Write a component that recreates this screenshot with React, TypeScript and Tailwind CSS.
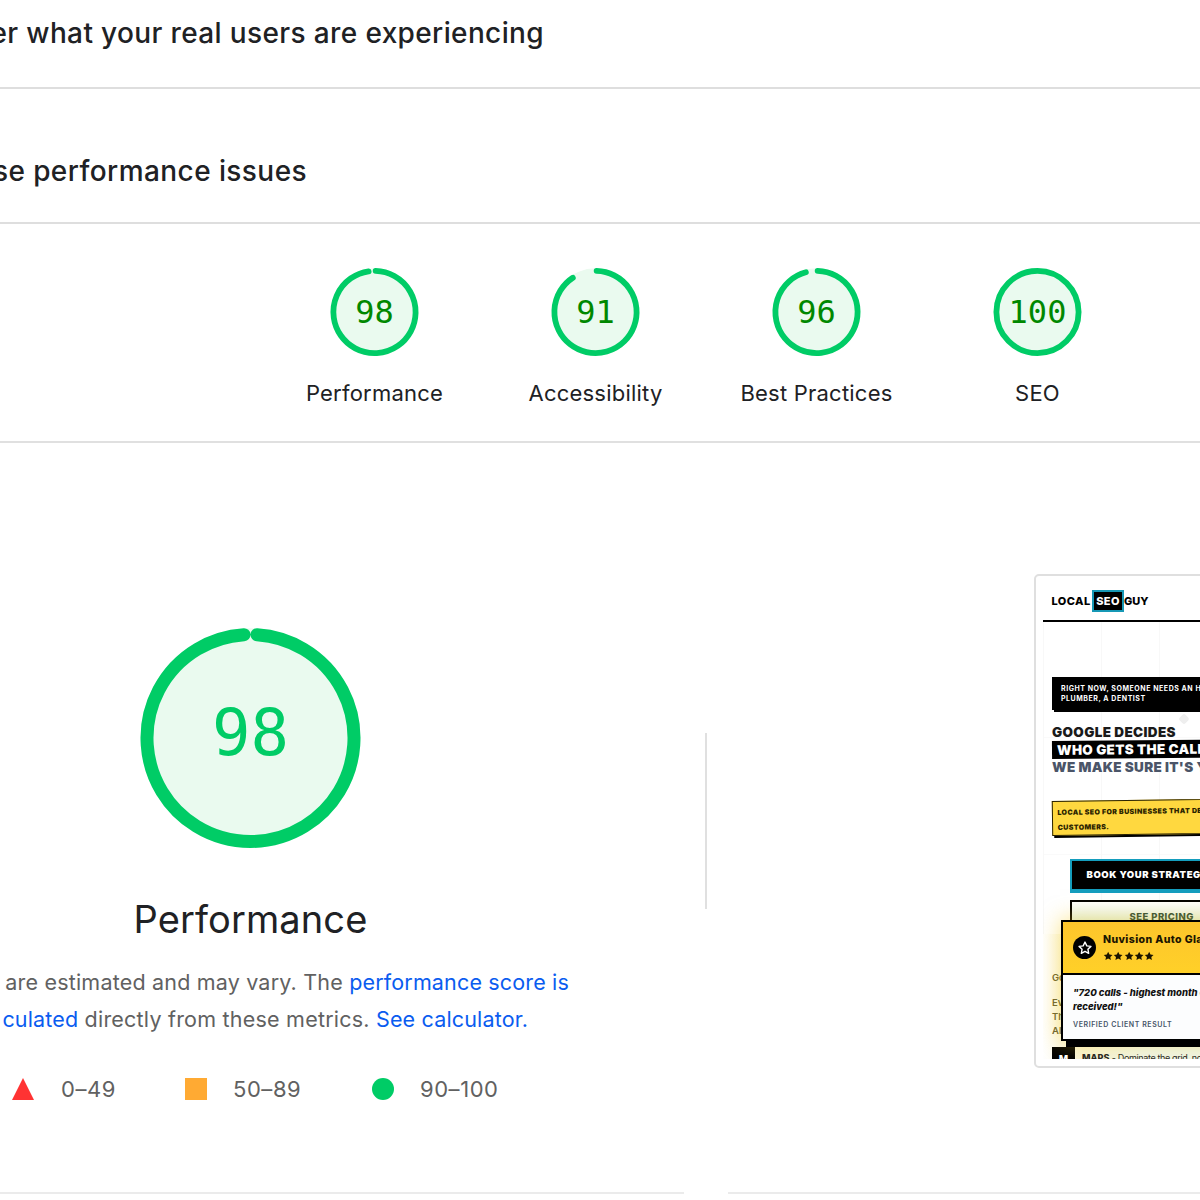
import React from "react";

const GREEN = "#00cc66";

function point(c: number, r: number, deg: number) {
  const a = (deg * Math.PI) / 180;
  return `${(c + r * Math.sin(a)).toFixed(3)} ${(c - r * Math.cos(a)).toFixed(3)}`;
}

type GaugeProps = { size: number; stroke: number; from: number; to: number; value: string; textClass: string };

function Gauge({ size, stroke, from, to, value, textClass }: GaugeProps) {
  const c = size / 2;
  const r = c - stroke / 2;
  const full = to - from >= 360;
  return (
    <div className="grid place-items-center">
      <svg className="col-start-1 row-start-1 overflow-visible" width={size} height={size} viewBox={`0 0 ${size} ${size}`}>
        <g transform="translate(0.5 0)">
          <circle cx={c} cy={c} r={c - 0.3} fill="#eafaef" />
          {full ? (
            <circle cx={c} cy={c} r={r} fill="none" stroke={GREEN} strokeWidth={stroke} />
          ) : (
            <path
              d={`M${point(c, r, from)} A${r} ${r} 0 1 1 ${point(c, r, to)}`}
              fill="none"
              stroke={GREEN}
              strokeWidth={stroke}
              strokeLinecap="round"
            />
          )}
        </g>
      </svg>
      <span className={textClass}>{value}</span>
    </div>
  );
}

const smallText =
  "col-start-1 row-start-1 pl-[1px] font-['DejaVu_Sans_Mono',monospace] text-[32px] leading-[36px] text-[#008800]";

const categories = [
  { label: "Performance", value: "98", from: 1.6, to: 351.8 },
  { label: "Accessibility", value: "91", from: 1.6, to: 326.5 },
  { label: "Best Practices", value: "96", from: 1.6, to: 345 },
  { label: "SEO", value: "100", from: 0, to: 360 },
];

function Star({ className, outline }: { className: string; outline?: boolean }) {
  return (
    <svg
      className={className}
      viewBox="0 0 24 24"
      fill={outline ? "none" : "currentColor"}
      stroke={outline ? "currentColor" : "none"}
      strokeWidth="2.4"
      strokeLinejoin="round"
    >
      <path d="M12 1.8l3.1 6.5 7.1.9-5.2 4.9 1.3 7.1L12 17.7l-6.3 3.5L7 14.1 1.8 9.2l7.1-.9z" />
    </svg>
  );
}

function Popup() {
  return (
    <div className="absolute top-[337px] left-[18px] w-[300px] border-2 border-black bg-white shadow-[5px_6px_0_#000,0_0_20px_1px_rgba(250,204,21,0.5)]">
      <div className="flex h-[53px] items-start gap-[7px] border-b-2 border-black bg-gradient-to-b from-[#fdc52c] to-[#ffd028] pl-[10px]">
        <div className="mt-[14px] grid size-[23px] place-items-center rounded-full bg-black text-white">
          <Star className="size-[14px]" outline />
        </div>
        <div className="pt-[11px] text-[#1a1400]">
          <div className="text-[10.5px] leading-[14px] font-extrabold tracking-[0.4px]">Nuvision Auto Glass</div>
          <div className="mt-[4px] flex">
            {[0, 1, 2, 3, 4].map((i) => (
              <Star key={i} className="size-[10.3px]" />
            ))}
          </div>
        </div>
      </div>
      <div className="h-[64px] bg-[#fcfdfe] pt-[11px] pl-[10px]">
        <div className="text-[9.5px] leading-[14px] font-extrabold tracking-[-0.02px] text-[#111] italic">
          "720 calls - highest month ever
          <br />
          received!"
        </div>
        <div className="mt-[6px] text-[7px] leading-[10px] font-semibold tracking-[0.58px] text-[#475569]">
          VERIFIED CLIENT RESULT
        </div>
      </div>
    </div>
  );
}

function PagePreview() {
  return (
    <div className="relative h-[476px] w-[380px] overflow-hidden bg-white bg-[linear-gradient(to_right,#f8f8f8_1px,transparent_1px),linear-gradient(to_bottom,#fafafa_1px,transparent_1px)] bg-[size:58px_117px] bg-[position:0_37px] font-[Inter,sans-serif] whitespace-nowrap">
      <div className="flex h-[39px] items-center border-b-[2.5px] border-black bg-white pb-[2px] pl-[8.5px] text-[11px] leading-[14px] font-extrabold text-black">
        <span className="w-[40.5px] tracking-[0.45px]">LOCAL</span>
        <span className="w-[32px] border-2 border-[#1798b5] bg-black py-[2px] text-center tracking-[0.4px] text-white">SEO</span>
        <span>GUY</span>
      </div>
      <div className="relative mt-[55px] ml-[9px] h-[33px] bg-black pt-[7px] pl-[9px] text-[7px] leading-[9.5px] font-bold tracking-[0.55px] text-white shadow-[2px_2px_0_#000]">
        RIGHT NOW, SOMEONE NEEDS AN HVAC TECH, A
        <br />
        PLUMBER, A DENTIST
        <div className="absolute top-[38px] left-[128px] size-[8px] rotate-45 rounded-[2px] bg-[#eeeeee]" />
      </div>
      <div className="mt-[13px] ml-[9px] text-[13.5px] leading-[18px] font-black text-[#1a1a1a]">
        <div className="tracking-[0.35px]">GOOGLE DECIDES</div>
        <div className="w-[230px] origin-left -rotate-[0.5deg] bg-black pl-[5px] tracking-[0.3px] text-white">WHO GETS THE CALL.</div>
        <div className="-mt-px tracking-[0.3px] text-[#4b5568]">WE MAKE SURE IT'S YOU.</div>
      </div>
      <div className="mt-[25px] ml-[9px] h-[35px] w-[320px] origin-left -rotate-[0.8deg] border border-[#2a2200] bg-[#ffd83f] pt-[3px] pl-[4.5px] text-[7px] leading-[15px] font-black tracking-[0.37px] text-[#2b2300] shadow-[2px_2px_0_#000]">
        LOCAL SEO FOR BUSINESSES THAT DEPEND ON LOCAL
        <br />
        CUSTOMERS.
      </div>
      <div className="mt-[23px] ml-[26.5px] h-[32px] w-[300px] border-2 border-[#149dbd] bg-black pt-[7px] pl-[15px] text-[9.5px] leading-[14px] font-black tracking-[0.55px] text-white shadow-[0_2px_0_#149dbd]">
        BOOK YOUR STRATEGY CALL
      </div>
      <div className="mt-[9px] ml-[26.5px] h-[34px] w-[300px] border-2 border-black bg-gradient-to-b from-white to-[#cfe8da] pt-[8px] pl-[58px] text-[9.5px] leading-[14px] font-extrabold tracking-[0.45px] text-[#24453a]">
        SEE PRICING
      </div>
      <div className="flex h-[130px] flex-col bg-[linear-gradient(to_right,#ffffff_0,#f8f3d0_40px,#eef5e6_100px)] pl-[9px] text-[9.5px] leading-[14px] font-semibold text-[#5f5a33]">
        <div className="mt-[37px]">Go</div>
        <div className="mt-[11px]">Ev</div>
        <div>Th</div>
        <div>All</div>
        <div className="mt-[9px] flex gap-[7px]">
          <div className="h-[22px] w-[23px] bg-black pt-[5px] text-center text-[10px] font-extrabold text-white">M</div>
          <div className="pt-[4px] text-[9px] font-normal tracking-[-0.36px] text-[#222]">
            <b className="font-extrabold tracking-[0.1px]">MAPS</b> - Dominate the grid, not just
          </div>
        </div>
      </div>
      <Popup />
    </div>
  );
}

export default function App() {
  return (
    <div className="flex h-[1200px] w-[1200px] flex-col overflow-hidden bg-white font-[Inter,sans-serif] text-[#202124]">
      <section className="h-[89px] shrink-0 border-b-2 border-[#dedede] pt-[13px]">
        <h2 className="flex w-[544px] justify-end text-[28px] leading-[40px] font-medium tracking-[0.37px] whitespace-nowrap">
          Discover what your real users are experiencing
        </h2>
      </section>
      <section className="h-[135px] shrink-0 border-b-2 border-[#dedede] pt-[62px]">
        <h2 className="flex w-[307px] justify-end text-[28px] leading-[40px] font-medium tracking-[0.42px] whitespace-nowrap">
          Diagnose performance issues
        </h2>
      </section>

      <section className="flex h-[219px] shrink-0 border-b-2 border-[#e0e0e0] pt-[43.5px] pl-[263.5px]">
        {categories.map((c) => (
          <div key={c.label} className="flex w-[221px] flex-col items-center">
            <Gauge size={88} stroke={5.8} from={c.from} to={c.to} value={c.value} textClass={smallText} />
            <span className="mt-[23.5px] pl-[1px] text-[22px] leading-[28px] tracking-[0.22px] whitespace-nowrap">{c.label}</span>
          </div>
        ))}
      </section>

      <section className="flex h-[749px] shrink-0">
        <div className="flex w-[705px] shrink-0 flex-col pt-[185px]">
          <div className="flex w-[500px] flex-col items-center">
            <Gauge
              size={220}
              stroke={13}
              from={3.6}
              to={356.4}
              value="98"
              textClass="col-start-1 row-start-1 -mt-[10px] pl-[1px] font-['DejaVu_Sans_Mono',monospace] text-[64px] leading-[72px] text-[#00cc66]"
            />
            <span className="mt-[47px] pl-[1px] text-[38px] leading-[48px] tracking-[0.1px]">Performance</span>
          </div>
          <div className="mt-[21px] flex flex-col text-[21.5px] leading-[37px] whitespace-nowrap text-[#616161]">
            <p className="flex w-[569px] justify-end tracking-[0.19px] whitespace-pre">
              Values are estimated and may vary. The <a className="tracking-[0.16px] text-[#0a5cf0]">performance score is</a>
            </p>
            <p className="flex w-[528px] justify-end tracking-[0.22px] whitespace-pre">
              <a className="text-[#0a5cf0]">
                <span className="tracking-[2px]">cal</span>
                <span className="tracking-[0.16px]">culated</span>
              </a>
              {" directly from these metrics. "}
              <a className="tracking-[0.16px] text-[#0a5cf0]">See calculator.</a>
            </p>
          </div>
          <div className="mt-[36px] flex h-[30px] items-center text-[22px] leading-[30px] tracking-[0.55px] text-[#616161]">
            <div className="flex w-[173px] items-center pl-[12px]">
              <svg width="22" height="22" viewBox="0 0 22 22" className="mr-[27px]">
                <path d="M11 0L22 22H0z" fill="#ff3333" />
              </svg>
              0–49
            </div>
            <div className="flex w-[187px] items-center pl-[12px]">
              <span className="mr-[26px] size-[22px] bg-[#ffaa33]" />
              50–89
            </div>
            <div className="flex items-center pl-[12px]">
              <span className="mr-[26px] size-[22px] rounded-full bg-[#00cc66]" />
              90–100
            </div>
          </div>
        </div>
        <div className="mt-[290px] h-[176px] w-[2px] shrink-0 bg-[#e0e0e0]" />
        <div className="mt-[131px] ml-[327px] h-[494px] w-[400px] shrink-0 rounded-[5px] border-2 border-[#dfdfdf] p-[7px]">
          <PagePreview />
        </div>
      </section>

      <div className="flex h-[8px] shrink-0 gap-[44px]">
        <div className="h-[2px] w-[684px] bg-[#ebebeb]" />
        <div className="h-[2px] grow bg-[#ebebeb]" />
      </div>
    </div>
  );
}
